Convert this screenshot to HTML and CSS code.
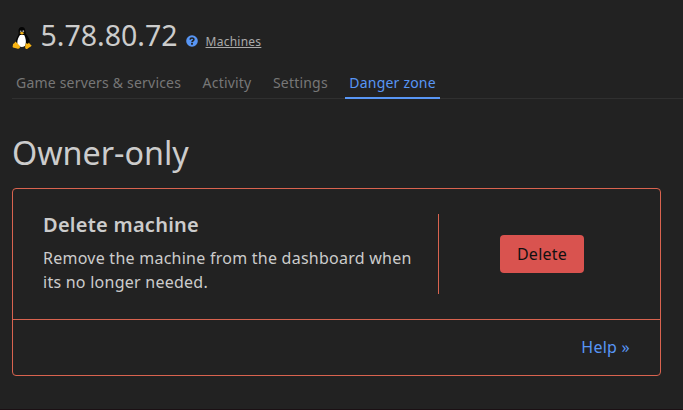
FILE: index.html
```
<!DOCTYPE html>
<html lang="en">
<head>
    <meta charset="UTF-8">
    <meta name="viewport" content="width=device-width, initial-scale=1.0">
    <title>5.78.80.72</title>
    <link rel="stylesheet" href="styles.css">
</head>
<body>
    <header class="machine-header">
        <svg class="tux" viewBox="0 0 20 24" width="20" height="24">
            <path fill="#050505" d="M10 1C7.500 1 6.200 3 6.500 5.500C7 8 6.300 9 5 11.500C3.800 14 3 17 4.500 19L9 21H14L17.500 17C18.300 13.500 16 10.500 14 8C13 6 14 1 10 1Z"/>
            <path fill="#fff" d="M8 9C6.500 11 5 14 5.300 17.500C6.500 21 10 22 13 20C14.600 16.500 13.800 12 12.200 9Z"/>
            <circle cx="8.700" cy="5.200" r=".8" fill="#aaa"/>
            <circle cx="11.300" cy="5.200" r=".9" fill="#aaa"/>
            <path fill="#f5b51b" d="M7.500 7L9.700 5.700L12.300 7L10 8.800Z"/>
            <path fill="#f8b414" d="M3.500 15.500L7.500 19.500C9 22 7 23.300 5 22.500L1 21.600C.2 21 1 20 1 18C2.500 17.700 2.700 16.500 3.500 15.500ZM14 17C15 18 16 18 17 16.500C17.500 18 18.500 18.500 19.600 19.500C19.500 20.700 17 21.500 15.500 22.700C13.500 23.500 12.800 22 13.200 20Z"/>
        </svg>
        <h1>5.78.80.72</h1>
        <svg class="help-icon" viewBox="0 0 12 12" width="12" height="12">
            <circle cx="6" cy="6" r="5.800" fill="#5896f5"/>
            <path d="M4.100 4.600C4.200 2.400 7.900 2.400 7.900 4.500C7.900 5.800 6 5.700 6 7.200" fill="none" stroke="#222" stroke-width="1.600"/>
            <rect x="5.100" y="8" width="1.800" height="1.700" fill="#222"/>
        </svg>
        <a class="breadcrumb" href="#">Machines</a>
    </header>

    <nav class="tabs">
        <a href="#">Game servers &amp; services</a>
        <a href="#">Activity</a>
        <a href="#">Settings</a>
        <a class="active" href="#">Danger zone</a>
    </nav>

    <h2>Owner-only</h2>

    <section class="danger-card">
        <div class="card-body">
            <div class="card-text">
                <h3>Delete machine</h3>
                <p>Remove the machine from the dashboard when its no longer needed.</p>
            </div>
            <div class="card-action">
                <button type="button">Delete</button>
            </div>
        </div>
        <div class="card-footer">
            <a href="#">Help »</a>
        </div>
    </section>
</body>
</html>
```
FILE: styles.css
```
* {
    box-sizing: border-box;
}
body {
    margin: 0;
    padding: 16px 0 0 12px;
    height: 410px;
    overflow: hidden;
    background-color: #222;
    border-bottom: 1px solid #1b1014;
    color: #ccc;
    font-family: "Noto Sans", sans-serif;
    font-size: 16px;
    letter-spacing: 0.25px;
}
h1, h2, h3, p {
    margin: 0;
    font-weight: 400;
}
a {
    text-decoration: none;
}
.machine-header {
    display: flex;
    align-items: baseline;
    height: 52px;
}
.tux {
    width: 20px;
    height: 24px;
    margin-right: 8.500px;
    align-self: flex-start;
    margin-top: 10px;
}
h1 {
    font-size: 28.500px;
    line-height: 38px;
    letter-spacing: 0;
}
.help-icon {
    align-self: flex-start;
    margin: 19px 8px 0;
}
.breadcrumb {
    color: #aaa;
    font-size: 12px;
    text-decoration: underline;
}
.tabs {
    display: flex;
    gap: 13.500px;
    height: 31px;
    border-bottom: 1px solid #303030;
}
.tabs a {
    height: 31px;
    padding: 5px 4px 0;
    color: #777;
    font-size: 14px;
    line-height: 20px;
    letter-spacing: 0.2px;
}
.tabs .active {
    color: #5896f5;
    border-bottom: 2px solid #5896f5;
}
h2 {
    margin: 30px 0 12px;
    font-size: 32.300px;
    line-height: 47px;
    letter-spacing: 0;
}
.danger-card {
    width: 649px;
    height: 188px;
    border: 1px solid #d9634f;
    border-radius: 4px;
}
.card-body {
    display: flex;
    height: 131px;
    padding: 25px 0;
    border-bottom: 1px solid #d9634f;
}
.card-text {
    width: 426px;
    padding-left: 30px;
    border-right: 1px solid #d9634f;
}
h3 {
    margin-top: -3px;
    font-size: 20px;
    font-weight: 600;
    line-height: 28px;
}
.card-text p {
    margin-top: 7px;
    padding-right: 20px;
    line-height: 24px;
}
.card-action {
    flex: 1;
    display: flex;
    align-items: center;
    padding-left: 61px;
}
button {
    width: 84px;
    height: 38px;
    padding: 0;
    border: none;
    border-radius: 4px;
    background-color: #d9534f;
    color: #111;
    font: inherit;
    letter-spacing: inherit;
    cursor: pointer;
}
.card-footer {
    padding: 15px 30px 0 0;
    text-align: right;
    line-height: 24px;
}
.card-footer a {
    color: #5896f5;
}
```
